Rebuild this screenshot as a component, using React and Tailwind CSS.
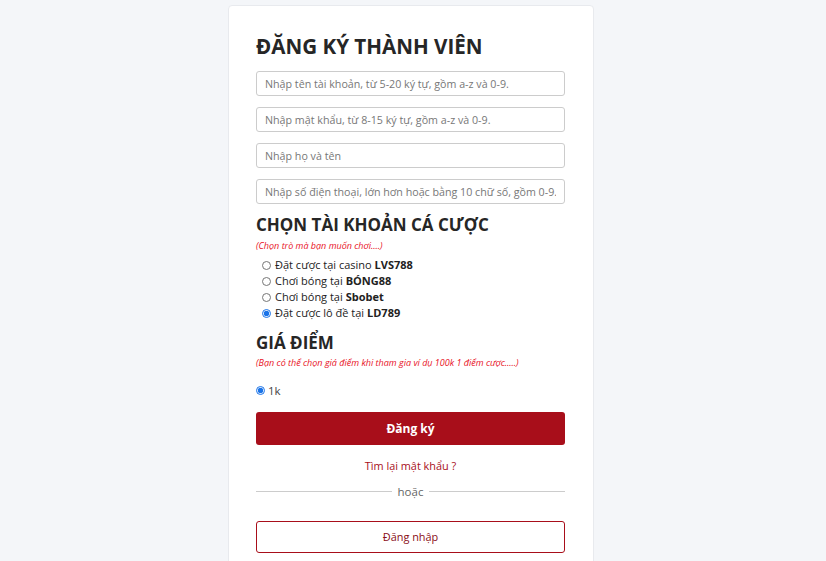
import React, { useState } from 'react';

const games = [
    { pre: 'Đặt cược tại casino ', name: 'LVS788' },
    { pre: 'Chơi bóng tại ', name: 'BÓNG88' },
    { pre: 'Chơi bóng tại ', name: 'Sbobet' },
    { pre: 'Đặt cược lô đề tại ', name: 'LD789' },
];

const placeholders = [
    'Nhập tên tài khoản, từ 5-20 ký tự, gồm a-z và 0-9.',
    'Nhập mật khẩu, từ 8-15 ký tự, gồm a-z và 0-9.',
    'Nhập họ và tên',
    'Nhập số điện thoại, lớn hơn hoặc bằng 10 chữ số, gồm 0-9.',
];

export default function App() {
    const [game, setGame] = useState(3);

    return (
        <div className="min-h-[561px] bg-[#f4f6f9] pt-[5px] font-['Open_Sans',sans-serif] text-[#333]">
            <div className="ml-[228px] w-[366px] rounded-t-[4px] border border-[#e8eaee] bg-white px-[27px] pt-[26px] pb-[20px]">
                <h1 className="text-[20.6px] font-bold leading-[29px] text-[#262626]">ĐĂNG KÝ THÀNH VIÊN</h1>

                {/* Inputs */}
                <div className="mt-[10px] flex flex-col gap-[11px]">
                    {placeholders.map((p) => (
                        <input
                            key={p}
                            placeholder={p}
                            className="h-[25px] w-[309px] rounded-[3px] border border-[#ccc] px-[8px] text-[10.7px] text-[#555] outline-none placeholder:text-[#777]"
                        />
                    ))}
                </div>

                {/* Betting account */}
                <h2 className="mt-[8px] text-[17px] font-bold leading-[26px] text-[#262626]">CHỌN TÀI KHOẢN CÁ CƯỢC</h2>
                <p className="mt-[2px] text-[9px] italic leading-[12px] text-[#e8101e]">(Chọn trò mà bạn muốn chơi....)</p>
                <div className="mt-[5px] flex flex-col pl-[6px]">
                    {games.map((g, i) => (
                        <label key={g.name} className="flex h-[16px] items-center gap-[4px] text-[11px] text-[#222]">
                            <input
                                type="radio"
                                name="game"
                                checked={game === i}
                                onChange={() => setGame(i)}
                                className="m-0 h-[9px] w-[9px] accent-[#1a73e8]"
                            />
                            <span>
                                {g.pre}
                                <b>{g.name}</b>
                            </span>
                        </label>
                    ))}
                </div>

                {/* Point price */}
                <h2 className="mt-[9px] text-[17px] font-bold leading-[26px] text-[#262626]">GIÁ ĐIỂM</h2>
                <p className="mt-[1px] text-[9px] italic leading-[12px] text-[#e8101e]">
                    (Bạn có thể chọn giá điểm khi tham gia ví dụ 100k 1 điểm cược.....)
                </p>
                <label className="mt-[13px] flex items-center gap-[3px] text-[11.5px] text-[#444]">
                    <input type="radio" name="price" defaultChecked className="m-0 h-[9px] w-[9px] accent-[#1a73e8]" />
                    <span>1k</span>
                </label>

                <button className="mt-[13px] h-[33px] w-[309px] rounded-[3px] bg-[#a80e1a] text-[12px] font-bold text-white">
                    Đăng ký
                </button>

                <div className="mt-[13px] w-[309px] text-center text-[10.9px] text-[#a80e1a]">Tìm lại mật khẩu ?</div>

                <div className="mt-[8px] flex w-[309px] items-center gap-[6px]">
                    <div className="h-px flex-1 bg-[#ccc]" />
                    <span className="text-[11.5px] text-[#666]">hoặc</span>
                    <div className="h-px flex-1 bg-[#ccc]" />
                </div>

                <button className="mt-[21px] h-[32px] w-[309px] rounded-[3px] border border-[#a80e1a] bg-white text-[10.9px] text-[#8a0c16]">
                    Đăng nhập
                </button>
            </div>
        </div>
    );
}
